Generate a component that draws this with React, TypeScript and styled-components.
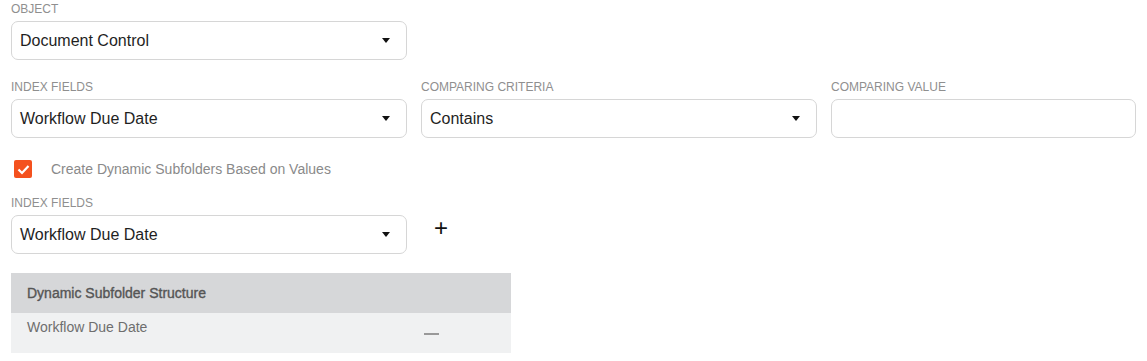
import React from "react";
import styled, { createGlobalStyle } from "styled-components";

const Global = createGlobalStyle`
  body { margin: 0; background: #fff; font-family: "Liberation Sans", Arial, sans-serif; }
`;

const Page = styled.div`
  padding: 2px 11px 0;
  display: flex;
  flex-direction: column;
`;

const Field = styled.div<{ $w?: string }>`
  display: flex;
  flex-direction: column;
  width: ${(p) => p.$w || "396px"};
  flex: ${(p) => (p.$w === "auto" ? "1" : "none")};
`;

const Label = styled.div`
  font-size: 12px;
  line-height: 14px;
  color: #8f8f8f;
  text-transform: uppercase;
  height: 14px;
  margin-bottom: 5px;
`;

const Select = styled.div`
  box-sizing: border-box;
  height: 39px;
  border: 1px solid #d6d6d6;
  border-radius: 7px;
  display: flex;
  align-items: center;
  justify-content: space-between;
  padding: 0 16px 0 8px;
  font-size: 16px;
  color: #1f1f1f;
  background: #fff;
`;

const Caret = styled.span`
  width: 0;
  height: 0;
  border-left: 4px solid transparent;
  border-right: 4px solid transparent;
  border-top: 5px solid #111;
`;

const Row = styled.div<{ $top: number }>`
  display: flex;
  gap: 14px;
  align-items: flex-start;
  margin-top: ${(p) => p.$top}px;
`;

const CheckRow = styled.label`
  display: flex;
  align-items: center;
  margin-top: 22px;
  padding-left: 3px;
  height: 18px;
  font-size: 14px;
  color: #8a8a8a;
`;

const Box = styled.span`
  width: 18px;
  height: 18px;
  border-radius: 2px;
  background: #f4511e;
  display: flex;
  align-items: center;
  justify-content: center;
  margin-right: 19px;
`;

const AddBtn = styled.div`
  font-size: 24px;
  line-height: 24px;
  color: #111;
  padding: 20px 0 0 13px;
  font-weight: 300;
`;

const Table = styled.div`
  width: 500px;
  margin-top: 19px;
  display: flex;
  flex-direction: column;
`;

const Head = styled.div`
  height: 40px;
  background: #d6d7d9;
  display: flex;
  align-items: center;
  padding-left: 16px;
  font-size: 14px;
  color: #555;
  -webkit-text-stroke: 0.35px #555;
`;

const BodyRow = styled.div`
  height: 40px;
  background: #f0f1f2;
  display: flex;
  justify-content: space-between;
  padding: 6px 0 0 16px;
  box-sizing: border-box;
  font-size: 14px;
  color: #6e6e6e;
`;

const Minus = styled.span`
  width: 15px;
  height: 2px;
  background: #999;
  margin: 14px 72px 0 0;
`;

const SelectField = ({ label, value, w }: { label: string; value: string; w?: string }) => (
  <Field $w={w}>
    <Label>{label}</Label>
    <Select>
      <span>{value}</span>
      <Caret />
    </Select>
  </Field>
);

export default function App() {
  return (
    <>
      <Global />
      <Page>
        <Row $top={0}>
          <SelectField label="Object" value="Document Control" />
        </Row>
        <Row $top={20}>
          <SelectField label="Index Fields" value="Workflow Due Date" />
          <SelectField label="Comparing Criteria" value="Contains" />
          <Field $w="auto">
            <Label>Comparing Value</Label>
            <Select />
          </Field>
        </Row>
        <CheckRow>
          <Box>
            <svg width="13" height="11" viewBox="0 0 13 11">
              <path d="M1.5 5.5 L5 9 L11.5 2" fill="none" stroke="#fff" strokeWidth="2.2" />
            </svg>
          </Box>
          Create Dynamic Subfolders Based on Values
        </CheckRow>
        <Row $top={18}>
          <SelectField label="Index Fields" value="Workflow Due Date" />
          <AddBtn>+</AddBtn>
        </Row>
        <Table>
          <Head>Dynamic Subfolder Structure</Head>
          <BodyRow>
            <span>Workflow Due Date</span>
            <Minus />
          </BodyRow>
        </Table>
      </Page>
    </>
  );
}
